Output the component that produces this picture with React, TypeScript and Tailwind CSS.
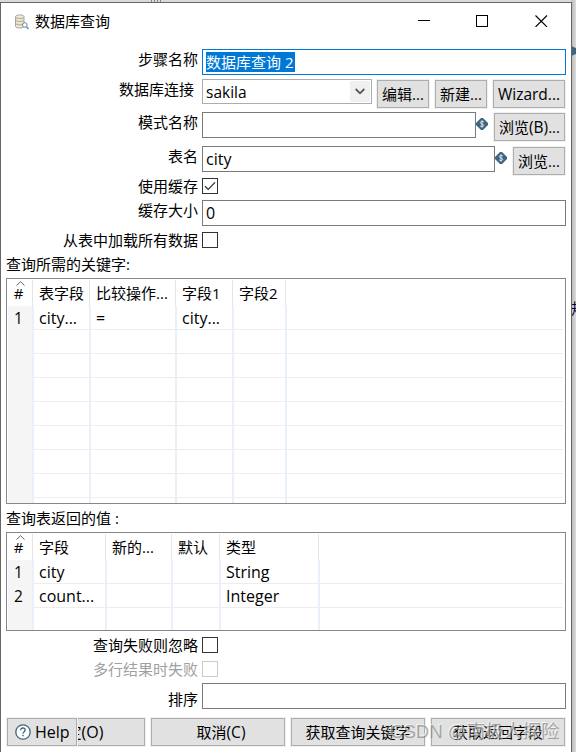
import type { ReactNode } from "react";

type Column = { title: string; width: string };

function Label({ children, className = "" }: { children: ReactNode; className?: string }) {
  return <div className={`h-[22px] w-[197px] shrink-0 text-right leading-[20px] whitespace-pre ${className}`}>{children}</div>;
}

function Field({ children, className = "" }: { children?: ReactNode; className?: string }) {
  return (
    <div className={`ml-1 h-[26px] border bg-white pl-[3px] text-[16px] leading-[25px] ${className}`}>{children}</div>
  );
}

function Button({ children, className = "" }: { children: ReactNode; className?: string }) {
  return (
    <div className={`flex h-[30px] shrink-0 border border-[#f0f0f0] ${className}`}>
      <button className="flex-1 border border-[#adadad] bg-[#e1e1e1] leading-[27px] whitespace-nowrap">{children}</button>
    </div>
  );
}

function Checkbox({ checked = false, disabled = false }: { checked?: boolean; disabled?: boolean }) {
  return (
    <div className={`ml-1 size-4 shrink-0 border bg-white ${disabled ? "border-[#cccccc]" : "border-[#333333]"}`}>
      {checked && (
        <svg viewBox="0 0 14 14" className="size-[14px]" fill="none" stroke="#333" strokeWidth="1.3">
          <path d="M2 7.2 5.2 10.4 12 3.4" />
        </svg>
      )}
    </div>
  );
}

function VariableMark() {
  return (
    <svg viewBox="0 0 12 12" className="mt-[6px] size-3 shrink-0">
      <path d="M5 0H7L12 5V7L7 12H5L0 7V5Z" fill="#3d6480" />
      <path d="M7.800 4.100C7.200 3.100 4.400 3 4.300 4.600 4.200 6.100 7.800 5.700 7.700 7.400 7.600 8.900 4.700 8.800 4.100 7.800M6 2.300V9.700" fill="none" stroke="#dfe7ec" />
    </svg>
  );
}

function Grid({ columns, rows, className }: { columns: Column[]; rows: string[][]; className: string }) {
  return (
    <div className={`ml-[5px] flex w-[560px] flex-col overflow-hidden border border-[#828790] p-px ${className}`}>
      <div className="flex h-[26px] shrink-0 leading-[26px]">
        <div className="relative w-[25px] shrink-0 border-r border-[#e5e5e5] pr-[3px] text-center">
          <svg viewBox="0 0 9 5" className="absolute top-[1px] left-2 h-[5px] w-[9px]" fill="none" stroke="#666">
            <path d="M.5 4.5 4.5.7 8.5 4.5" />
          </svg>
          #
        </div>
        {columns.map((c) => (
          <div key={c.title} className={`shrink-0 border-r border-[#e5e5e5] pl-[6px] whitespace-nowrap ${c.width}`}>
            {c.title}
          </div>
        ))}
      </div>
      {rows.map((row, r) => (
        <div key={r} className="mr-px flex h-6 shrink-0 border-b border-[#ededed] text-[16px] leading-[25px]">
          <div className="-mb-px h-6 w-[24px] shrink-0 bg-[#f5f5f5] pr-[3px] text-center text-[15.5px]">{row[0]}</div>
          <div className="-mb-px h-6 w-[2px] shrink-0 bg-[#e9f0f9]" />
          {columns.map((c, i) => (
            <div key={c.title} className={`-mb-px flex h-6 shrink-0 ${c.width}`}>
              <div className="min-w-0 flex-1 pl-[5px] whitespace-nowrap">{row[i + 1]}</div>
              <div className="w-[2px] shrink-0 bg-[#e9f0f9]" />
            </div>
          ))}
        </div>
      ))}
    </div>
  );
}

const keyColumns: Column[] = [
  { title: "表字段", width: "w-[57px]" },
  { title: "比较操作...", width: "w-[86px]" },
  { title: "字段1", width: "w-[57px]" },
  { title: "字段2", width: "w-[53px]" },
];
const valueColumns: Column[] = [
  { title: "字段", width: "w-[73px]" },
  { title: "新的...", width: "w-[66px]" },
  { title: "默认", width: "w-[48px]" },
  { title: "类型", width: "w-[99px]" },
];
const keyRows = [["1", "city...", "=", "city...", ""], [], [], [], [], [], [], [], []];
const valueRows = [["1", "city", "", "", "String"], ["2", "count...", "", "", "Integer"], []];

export default function App() {
  return (
    <div className="relative h-[752px] w-[576px] overflow-hidden bg-[linear-gradient(to_right,#dadada_571px,#bcbcbc_572px,#dcdcdc_576px)] pt-[2px] font-['Open_Sans','Noto_Sans_CJK_SC',sans-serif] text-[15px] text-black">
      <div className="absolute top-0 left-[151px] flex h-[2px] gap-[2px]">
        <div className="w-px bg-[#888]" />
        <div className="w-px bg-[#888]" />
        <div className="w-px bg-[#888]" />
        <div className="w-px bg-[#888]" />
      </div>
      <svg viewBox="0 0 5 10" className="absolute top-[46px] left-[571px] h-[10px] w-[5px]">
        <path d="M0 0 5 2V8L0 10Z" fill="#3d6480" />
      </svg>
      <div className="absolute top-[298px] left-[571px] w-[5px] overflow-hidden leading-[20px] text-[#000040]">
        <span>规</span>
      </div>
      <div className="relative flex h-[752px] w-[572px] flex-col border-t border-r border-l border-[#666666] bg-white">
        <div className="flex h-[46px] shrink-0">
          <svg viewBox="0 0 16 16" className="mt-[11px] ml-[13px] size-4" fill="none">
            <path d="M1.500 3v9.500C2 14.500 9 14.500 10 12.500V3" fill="#f8e4c4" stroke="#9aaab4" />
            <ellipse cx="5.800" cy="2.700" rx="4.300" ry="1.800" fill="#fae9cf" stroke="#9aaab4" />
            <path d="M1.500 6c1 2 7.500 2 8.500 0M1.500 9.300c1 2 7.500 2 8.500 0" stroke="#9aaab4" />
            <circle cx="10.800" cy="11" r="2.300" fill="#fff" stroke="#648aa5" />
            <path d="m12.500 12.700 2 2.300" stroke="#648aa5" strokeWidth="1.300" />
          </svg>
          <div className="mt-[7px] ml-[5px] leading-[22px]">数据库查询</div>
          <svg viewBox="0 0 130 12" className="mt-3 mr-[23px] ml-auto h-3 w-[130px]" fill="none" stroke="#000" shapeRendering="crispEdges">
            <path d="M0 5.500H12M58.500.500H69.500V11.500H58.500Z" />
            <path d="m117.500.500 11.500 11.500M129 .500 117.500 12" shapeRendering="geometricPrecision" strokeWidth="1.100" />
          </svg>
        </div>

        <div className="flex h-[30px] shrink-0">
          <Label>步骤名称</Label>
          <Field className="w-[364px] border-[#0078d7] py-[2px]">
            <span className="block h-5 w-[89px] overflow-hidden bg-[#0078d7] text-[15px] leading-[20px] whitespace-nowrap text-white">数据库查询 2</span>
          </Field>
        </div>
        <div className="flex h-[33px] shrink-0">
          <Label>数据库连接 </Label>
          <div className="ml-1 flex h-[25px] w-[170px] border border-[#adadad] pl-[3px] text-[15.5px] leading-[24px]">
            <span className="flex-1">sakila</span>
            <div className="my-px mr-px grid w-5 place-items-center bg-[#f0f0f0]">
              <svg viewBox="0 0 10 7" className="h-[7px] w-[10px]" fill="none" stroke="#555" strokeWidth="1.800">
                <path d="m.700 1 4.300 4.300L9.300 1" />
              </svg>
            </div>
          </div>
          <Button className="ml-1 w-[54px]">编辑...</Button>
          <Button className="ml-1 w-[54px]">新建...</Button>
          <Button className="ml-1 w-[74px] text-[15.5px]">Wizard...</Button>
        </div>
        <div className="flex h-[34px] shrink-0">
          <Label>模式名称</Label>
          <Field className="w-[274px] border-[#7a7a7a]" />
          <VariableMark />
          <Button className="ml-[5px] w-[73px]">浏览<span className="text-[15.5px]">(B)</span>...</Button>
        </div>
        <div className="flex h-[32px] shrink-0">
          <Label>表名</Label>
          <Field className="w-[293px] border-[#7a7a7a]">city</Field>
          <VariableMark />
          <Button className="ml-[5px] w-[54px]">浏览...</Button>
        </div>
        <div className="flex h-[22px] shrink-0">
          <Label className="-mt-[2px]">使用缓存</Label>
          <Checkbox checked />
        </div>
        <div className="flex h-[32px] shrink-0">
          <Label>缓存大小</Label>
          <Field className="w-[364px] border-[#7a7a7a]">0</Field>
        </div>
        <div className="flex h-[22px] shrink-0">
          <Label className="-mt-[2px]">从表中加载所有数据</Label>
          <Checkbox />
        </div>
        <div className="ml-[5px] h-6 shrink-0 leading-[20px]">查询所需的关键字:</div>
        <Grid columns={keyColumns} rows={keyRows} className="h-[226px] shrink-0" />
        <div className="ml-[5px] h-[28px] shrink-0 pt-[4px] leading-[20px]">查询表返回的值 :</div>
        <Grid columns={valueColumns} rows={valueRows} className="h-[99px] shrink-0" />
        <div className="mt-[6px] flex h-6 shrink-0">
          <Label className="-mt-[2px]">查询失败则忽略</Label>
          <Checkbox />
        </div>
        <div className="flex h-[22px] shrink-0">
          <Label className="-mt-[2px] text-[#a0a0a0]">多行结果时失败</Label>
          <Checkbox disabled />
        </div>
        <div className="flex h-[34px] shrink-0">
          <Label className="mt-[6px]">排序</Label>
          <Field className="w-[364px] border-[#7a7a7a]" />
        </div>
        <div className="ml-[5px] flex gap-1">
          <div className="relative">
            <Button className="w-[140px]">
              <span className="pl-[3px]">
                确定<span className="text-[16px]">(O)</span>
              </span>
            </Button>
            <div className="absolute top-px left-px flex h-7 w-[70px] items-center border border-[#adadad] bg-[#e1e1e1] pl-[7px] shadow-[1px_0_0_#f0f0f0]">
              <svg viewBox="0 0 16 16" className="size-4" fill="none" stroke="#3d6480">
                <circle cx="8" cy="8" r="7.200" strokeWidth="1.300" fill="#fff" />
                <path d="M5.700 6.200C5.700 3.200 10.300 3.400 10.200 6.100 10.200 7.700 8 7.700 8 9.500M8 10.800V12.300" strokeWidth="1.400" />
              </svg>
              <span className="ml-1 text-[16px] leading-[26px]">Help</span>
            </div>
          </div>
          <Button className="w-[136px]">
            <span className="pl-[6px]">
              取消<span className="text-[15.5px]">(C)</span>
            </span>
          </Button>
          <Button className="w-[136px]">获取查询关键字</Button>
          <Button className="w-[136px]">获取返回字段</Button>
        </div>
      </div>
      <div className="absolute top-[719px] left-[390px] font-['Liberation_Sans','Noto_Sans_CJK_SC',sans-serif] text-[18.6px] leading-[26px] whitespace-nowrap text-[#777]/60 [text-shadow:-1px_-1px_0_#ffffff99]">CSDN @南极人探险</div>
    </div>
  );
}
